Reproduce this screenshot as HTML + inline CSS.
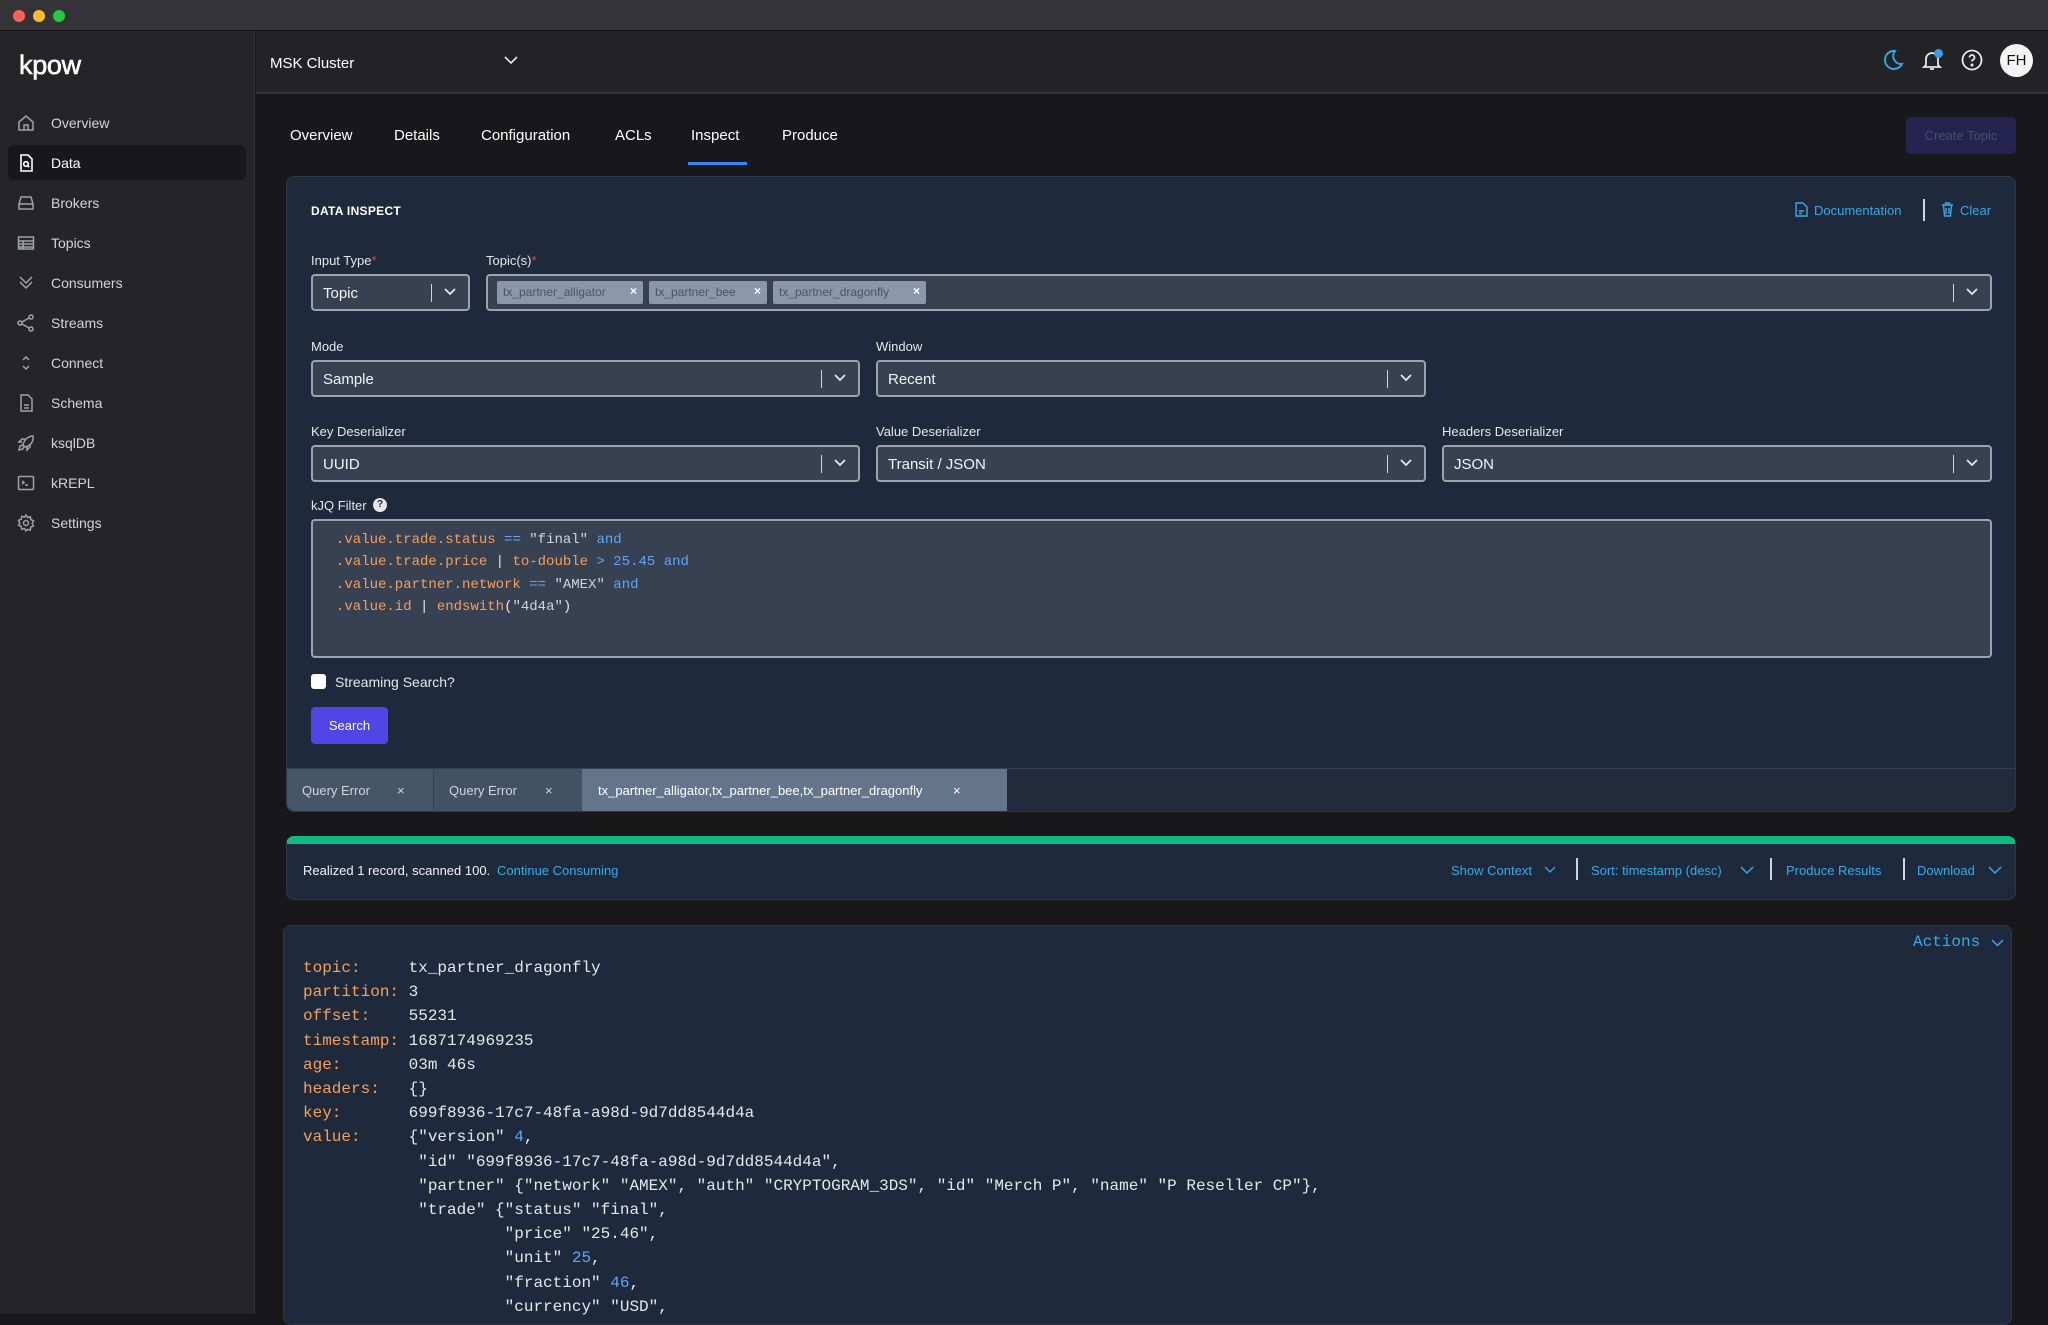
<!DOCTYPE html>
<html><head><meta charset="utf-8">
<style>
*{box-sizing:border-box;margin:0;padding:0}
body{width:2048px;height:1314px;overflow:hidden;background:#18181a;font-family:"Liberation Sans",sans-serif;color:#e5e7eb;position:relative}
.a{position:absolute}
.mono{font-family:"Liberation Mono",monospace}
.nav{position:absolute;left:0;width:255px;height:36px;font-size:14px;color:#d4d4d8}
.nav svg{position:absolute;left:16px;top:8px}
.nav span{position:absolute;left:51px;top:10px}
.lbl{position:absolute;font-size:13px;color:#e5e7eb}
.sel{position:absolute;height:37px;background:#374151;border:2px solid #9ca3af;border-radius:4px;font-size:15px;color:#f3f4f6}
.sel .t{position:absolute;left:10px;top:9px}
.sel .bar{position:absolute;right:36px;top:8px;width:1px;height:18px;background:#cbd5e1}
.sel svg{position:absolute;right:12px;top:12px}
.chip{position:absolute;top:5px;height:23px;background:#8b97aa;border-radius:2px;font-size:12px;color:#4b5563;padding:4px 0 0 6px}
.chip b{position:absolute;right:6px;top:3px;color:#fff;font-size:12px}
.tab{position:absolute;top:0;height:43px;font-size:13px;color:#d1d5db;padding-top:14px}
.rec{position:absolute;left:303px;font-size:16px;line-height:24.2px;color:#e2e8f0;white-space:pre}
.k{color:#f5a05a}.n{color:#60a5fa}
</style></head><body>
<div class="a" style="left:0;top:0;width:2048px;height:31px;background:#343436;border-bottom:1px solid #111"></div>
<div class="a" style="left:13px;top:10px;width:12px;height:12px;border-radius:50%;background:#ff5f57"></div>
<div class="a" style="left:33px;top:10px;width:12px;height:12px;border-radius:50%;background:#febc2e"></div>
<div class="a" style="left:53px;top:10px;width:12px;height:12px;border-radius:50%;background:#28c840"></div>
<div class="a" style="left:0;top:31px;width:255px;height:1283px;background:#252527;border-right:1px solid #333"></div>
<div class="a" style="left:19px;top:50px;font-size:27px;color:#fff;letter-spacing:-0.3px;-webkit-text-stroke:0.6px #fff">kpow</div>
<div class="a" style="left:8px;top:145px;width:238px;height:35px;background:#18181a;border-radius:6px"></div>
<div class="nav" style="top:105px"><svg width="20" height="20" viewBox="0 0 20 20" fill="none" stroke="#a1a1aa" stroke-width="1.5"><path d="M3 9L10 3l7 6v8H3z M8 17v-5h4v5"/></svg><span>Overview</span></div>
<div class="nav" style="top:145px;color:#fff"><svg width="20" height="20" viewBox="0 0 20 20" fill="none" stroke="#fff" stroke-width="1.6"><path d="M5 2h7l4 4v12H5z"/><circle cx="10" cy="11" r="2.3"/><path d="M11.6 12.6l1.6 1.6"/></svg><span>Data</span></div>
<div class="nav" style="top:185px"><svg width="20" height="20" viewBox="0 0 20 20" fill="none" stroke="#a1a1aa" stroke-width="1.5"><path d="M3 11l2-7h10l2 7v5H3z M3 11h14"/></svg><span>Brokers</span></div>
<div class="nav" style="top:225px"><svg width="20" height="20" viewBox="0 0 20 20" fill="none" stroke="#a1a1aa" stroke-width="1.5"><rect x="2.5" y="4" width="15" height="12"/><path d="M2.5 8h15M2.5 11h15M2.5 14h15M7 8v8"/></svg><span>Topics</span></div>
<div class="nav" style="top:265px"><svg width="20" height="20" viewBox="0 0 20 20" fill="none" stroke="#a1a1aa" stroke-width="1.5"><path d="M4 4l6 6 6-6M4 9l6 6 6-6"/></svg><span>Consumers</span></div>
<div class="nav" style="top:305px"><svg width="20" height="20" viewBox="0 0 20 20" fill="none" stroke="#a1a1aa" stroke-width="1.5"><circle cx="15" cy="4" r="2"/><circle cx="4" cy="10" r="2"/><circle cx="15" cy="16" r="2"/><path d="M6 9l7-4M6 11l7 4"/></svg><span>Streams</span></div>
<div class="nav" style="top:345px"><svg width="20" height="20" viewBox="0 0 20 20" fill="none" stroke="#a1a1aa" stroke-width="1.5"><path d="M7 7l3-3 3 3M7 13l3 3 3-3"/></svg><span>Connect</span></div>
<div class="nav" style="top:385px"><svg width="20" height="20" viewBox="0 0 20 20" fill="none" stroke="#a1a1aa" stroke-width="1.5"><path d="M5 2h7l4 4v12H5z M8 12h5M8 15h5"/></svg><span>Schema</span></div>
<div class="nav" style="top:425px"><svg width="20" height="20" viewBox="0 0 20 20" fill="none" stroke="#a1a1aa" stroke-width="1.5"><path d="M17 3c-5 0-9 4-10 9l2 2c5-1 9-5 8-11zM7 12l-3 1-1 4 4-1 1-3M6 9H3l3-3h3M11 14v3l3-3v-3"/></svg><span>ksqlDB</span></div>
<div class="nav" style="top:465px"><svg width="20" height="20" viewBox="0 0 20 20" fill="none" stroke="#a1a1aa" stroke-width="1.5"><rect x="2.5" y="3.5" width="15" height="13" rx="1"/><path d="M6 8l2 1.5-2 1.5M9 12h3"/></svg><span>kREPL</span></div>
<div class="nav" style="top:505px"><svg width="20" height="20" viewBox="0 0 20 20" fill="none" stroke="#a1a1aa" stroke-width="1.5"><circle cx="10" cy="10" r="2.5"/><path d="M10 2l1.5 2.5 2.8-.8.5 2.9 2.7 1.2-1.3 2.6 1.3 2.6-2.7 1.2-.5 2.9-2.8-.8L10 18l-1.5-2.5-2.8.8-.5-2.9-2.7-1.2L3.8 10 2.5 7.4l2.7-1.2.5-2.9 2.8.8z"/></svg><span>Settings</span></div>
<div class="a" style="left:256px;top:31px;width:1792px;height:63px;background:#232325;border-bottom:2px solid #333"></div>
<div class="a" style="left:270px;top:55px;font-size:15px;color:#fff">MSK Cluster</div>
<svg class="a" style="left:503px;top:54px" width="16" height="12" viewBox="0 0 16 12" fill="none" stroke="#e5e7eb" stroke-width="1.6"><path d="M2 3l6 6 6-6"/></svg>
<svg class="a" style="left:1880px;top:48px" width="24" height="24" viewBox="0 0 24 24" fill="none" stroke="#3aa0e8" stroke-width="2"><path d="M15 3a9 9 0 1 0 7 13A8 8 0 0 1 15 3z"/></svg>
<svg class="a" style="left:1920px;top:48px" width="24" height="24" viewBox="0 0 24 24" fill="none" stroke="#e5e7eb" stroke-width="1.8"><path d="M6 17V11a6 6 0 0 1 12 0v6l2 2H4zM10 21h4"/></svg>
<div class="a" style="left:1934px;top:49px;width:9px;height:9px;border-radius:50%;background:#3b9aea"></div>
<svg class="a" style="left:1960px;top:48px" width="24" height="24" viewBox="0 0 24 24" fill="none" stroke="#e5e7eb" stroke-width="1.8"><circle cx="12" cy="12" r="9.5"/><path d="M9.5 9.5a2.5 2.5 0 1 1 3.5 2.3c-.7.3-1 .9-1 1.7"/><circle cx="12" cy="17" r=".6" fill="#e5e7eb"/></svg>
<div class="a" style="left:2000px;top:44px;width:33px;height:33px;border-radius:50%;background:#f4f4f5;color:#111;font-size:15px;text-align:center;line-height:33px">FH</div>
<div class="a" style="left:290px;top:127px;font-size:15px;color:#fff">Overview</div>
<div class="a" style="left:394px;top:127px;font-size:15px;color:#fff">Details</div>
<div class="a" style="left:481px;top:127px;font-size:15px;color:#fff">Configuration</div>
<div class="a" style="left:615px;top:127px;font-size:15px;color:#fff">ACLs</div>
<div class="a" style="left:691px;top:127px;font-size:15px;color:#fff">Inspect</div>
<div class="a" style="left:782px;top:127px;font-size:15px;color:#fff">Produce</div>
<div class="a" style="left:688px;top:162px;width:59px;height:3px;background:#3b82f6"></div>
<div class="a" style="left:1906px;top:117px;width:110px;height:37px;background:#25234f;border-radius:5px;color:#4b4d6e;font-size:13px;text-align:center;line-height:37px">Create Topic</div>
<div class="a" style="left:286px;top:176px;width:1730px;height:636px;background:#1e293b;border-radius:8px;border:1px solid #2c3748;overflow:hidden"></div>
<div class="a" style="left:311px;top:204px;font-size:12px;font-weight:bold;color:#fff;letter-spacing:.3px">DATA INSPECT</div>
<svg class="a" style="left:1795px;top:202px" width="13" height="15" viewBox="0 0 13 15" fill="none" stroke="#38a9e8" stroke-width="1.4"><path d="M1 1h7l4 4v9H1zM4 9h5M4 11.5h3"/></svg>
<div class="a" style="left:1814px;top:203px;font-size:13px;color:#38a9e8">Documentation</div>
<div class="a" style="left:1923px;top:199px;width:2px;height:22px;background:#cbd5e1"></div>
<svg class="a" style="left:1941px;top:202px" width="13" height="15" viewBox="0 0 13 15" fill="none" stroke="#38a9e8" stroke-width="1.4"><path d="M1 3h11M4.5 3V1h4v2M2.5 3l1 11h6l1-11M5 6v6M8 6v6"/></svg>
<div class="a" style="left:1960px;top:203px;font-size:13px;color:#38a9e8">Clear</div>
<div class="lbl" style="left:311px;top:253px">Input Type<span style="color:#ef4444">*</span></div>
<div class="sel" style="left:311px;top:274px;width:159px"><span class="t">Topic</span><i class="bar"></i><svg width="12" height="8" viewBox="0 0 12 8" fill="none" stroke="#e5e7eb" stroke-width="1.8"><path d="M1 1l5 5 5-5"/></svg></div>
<div class="lbl" style="left:486px;top:253px">Topic(s)<span style="color:#ef4444">*</span></div>
<div class="sel" style="left:486px;top:274px;width:1506px">
 <div class="chip" style="left:9px;width:146px">tx_partner_alligator<b>×</b></div>
 <div class="chip" style="left:161px;width:118px">tx_partner_bee<b>×</b></div>
 <div class="chip" style="left:285px;width:153px">tx_partner_dragonfly<b>×</b></div>
 <i class="bar"></i><svg width="12" height="8" viewBox="0 0 12 8" fill="none" stroke="#e5e7eb" stroke-width="1.8"><path d="M1 1l5 5 5-5"/></svg></div>
<div class="lbl" style="left:311px;top:339px">Mode</div>
<div class="sel" style="left:311px;top:360px;width:549px"><span class="t">Sample</span><i class="bar"></i><svg width="12" height="8" viewBox="0 0 12 8" fill="none" stroke="#e5e7eb" stroke-width="1.8"><path d="M1 1l5 5 5-5"/></svg></div>
<div class="lbl" style="left:876px;top:339px">Window</div>
<div class="sel" style="left:876px;top:360px;width:550px"><span class="t">Recent</span><i class="bar"></i><svg width="12" height="8" viewBox="0 0 12 8" fill="none" stroke="#e5e7eb" stroke-width="1.8"><path d="M1 1l5 5 5-5"/></svg></div>
<div class="lbl" style="left:311px;top:424px">Key Deserializer</div>
<div class="sel" style="left:311px;top:445px;width:549px"><span class="t">UUID</span><i class="bar"></i><svg width="12" height="8" viewBox="0 0 12 8" fill="none" stroke="#e5e7eb" stroke-width="1.8"><path d="M1 1l5 5 5-5"/></svg></div>
<div class="lbl" style="left:876px;top:424px">Value Deserializer</div>
<div class="sel" style="left:876px;top:445px;width:550px"><span class="t">Transit / JSON</span><i class="bar"></i><svg width="12" height="8" viewBox="0 0 12 8" fill="none" stroke="#e5e7eb" stroke-width="1.8"><path d="M1 1l5 5 5-5"/></svg></div>
<div class="lbl" style="left:1442px;top:424px">Headers Deserializer</div>
<div class="sel" style="left:1442px;top:445px;width:550px"><span class="t">JSON</span><i class="bar"></i><svg width="12" height="8" viewBox="0 0 12 8" fill="none" stroke="#e5e7eb" stroke-width="1.8"><path d="M1 1l5 5 5-5"/></svg></div>
<div class="lbl" style="left:311px;top:498px">kJQ Filter</div>
<div class="a" style="left:373px;top:498px;width:14px;height:14px;border-radius:50%;background:#e5e7eb;color:#1e293b;font-size:10px;font-weight:bold;text-align:center;line-height:14px">?</div>
<div class="a" style="left:311px;top:519px;width:1681px;height:139px;background:#374151;border:2px solid #9ca3af;border-radius:4px"></div>
<div class="a mono" style="left:336px;top:529px;font-size:14px;line-height:22.3px;white-space:pre;color:#e5e7eb"><span class="k">.value.trade.status</span> <span class="n">==</span> <span style="color:#cbd5e1">"final"</span> <span class="n">and</span>
<span class="k">.value.trade.price</span> | <span class="k">to-double</span> <span class="n">&gt;</span> <span class="n">25.45</span> <span class="n">and</span>
<span class="k">.value.partner.network</span> <span class="n">==</span> <span style="color:#cbd5e1">"AMEX"</span> <span class="n">and</span>
<span class="k">.value.id</span> | <span class="k">endswith</span>(<span style="color:#cbd5e1">"4d4a"</span>)</div>
<div class="a" style="left:311px;top:674px;width:15px;height:15px;background:#fff;border-radius:3px"></div>
<div class="a" style="left:335px;top:674px;font-size:14px;color:#e5e7eb">Streaming Search?</div>
<div class="a" style="left:311px;top:707px;width:77px;height:37px;background:#4f46e5;border-radius:4px;color:#fff;font-size:13px;text-align:center;line-height:37px">Search</div>
<div class="a" style="left:287px;top:768px;width:1728px;height:43px;background:#212b3b;border-top:1px solid #334155;border-radius:0 0 8px 8px;overflow:hidden">
 <div class="tab" style="left:0;width:146px;background:#475569;padding-left:15px">Query Error<span style="position:absolute;left:110px">×</span></div>
 <div class="tab" style="left:146px;width:149px;background:#435165;border-left:1px solid #334155;padding-left:15px">Query Error<span style="position:absolute;left:111px">×</span></div>
 <div class="tab" style="left:295px;width:425px;background:#64748b;color:#fff;padding-left:16px">tx_partner_alligator,tx_partner_bee,tx_partner_dragonfly<span style="position:absolute;left:371px">×</span></div>
</div>
<div class="a" style="left:286px;top:836px;width:1730px;height:64px;background:#1e293b;border-radius:8px;border:1px solid #2c3748;border-top:8px solid #10b981"></div>
<div class="a" style="left:303px;top:863px;font-size:13px;color:#f3f4f6">Realized 1 record, scanned 100.</div>
<div class="a" style="left:497px;top:863px;font-size:13px;color:#38a9e8">Continue Consuming</div>
<div class="a" style="left:1451px;top:863px;font-size:13px;color:#38a9e8">Show Context</div>
<svg class="a" style="left:1544px;top:866px" width="12" height="8" viewBox="0 0 12 8" fill="none" stroke="#38a9e8" stroke-width="1.3"><path d="M1 1l5 5 5-5"/></svg>
<div class="a" style="left:1576px;top:858px;width:2px;height:22px;background:#cbd5e1"></div>
<div class="a" style="left:1591px;top:863px;font-size:13px;color:#38a9e8">Sort: timestamp (desc)</div>
<svg class="a" style="left:1740px;top:866px" width="14" height="9" viewBox="0 0 14 9" fill="none" stroke="#38a9e8" stroke-width="1.5"><path d="M1 1l6 6 6-6"/></svg>
<div class="a" style="left:1770px;top:858px;width:2px;height:22px;background:#cbd5e1"></div>
<div class="a" style="left:1786px;top:863px;font-size:13px;color:#38a9e8">Produce Results</div>
<div class="a" style="left:1903px;top:858px;width:2px;height:22px;background:#cbd5e1"></div>
<div class="a" style="left:1917px;top:863px;font-size:13px;color:#38a9e8">Download</div>
<svg class="a" style="left:1988px;top:866px" width="14" height="9" viewBox="0 0 14 9" fill="none" stroke="#38a9e8" stroke-width="1.5"><path d="M1 1l6 6 6-6"/></svg>
<div class="a" style="left:283px;top:925px;width:1729px;height:400px;background:#1e293b;border-radius:8px;border:1px solid #2c3748"></div>
<div class="a mono" style="left:1913px;top:933px;font-size:16px;color:#38a9e8">Actions</div>
<svg class="a" style="left:1991px;top:939px" width="13" height="9" viewBox="0 0 13 9" fill="none" stroke="#38a9e8" stroke-width="1.5"><path d="M1 1l5.5 5.5 5.5-5.5"/></svg>
<div class="rec mono" style="top:956px"><span class="k">topic:     </span>tx_partner_dragonfly
<span class="k">partition: </span>3
<span class="k">offset:    </span>55231
<span class="k">timestamp: </span>1687174969235
<span class="k">age:       </span>03m 46s
<span class="k">headers:   </span>{}
<span class="k">key:       </span>699f8936-17c7-48fa-a98d-9d7dd8544d4a
<span class="k">value:     </span>{"version" <span class="n">4</span>,
            "id" "699f8936-17c7-48fa-a98d-9d7dd8544d4a",
            "partner" {"network" "AMEX", "auth" "CRYPTOGRAM_3DS", "id" "Merch P", "name" "P Reseller CP"},
            "trade" {"status" "final",
                     "price" "25.46",
                     "unit" <span class="n">25</span>,
                     "fraction" <span class="n">46</span>,
                     "currency" "USD",</div>
</body></html>
